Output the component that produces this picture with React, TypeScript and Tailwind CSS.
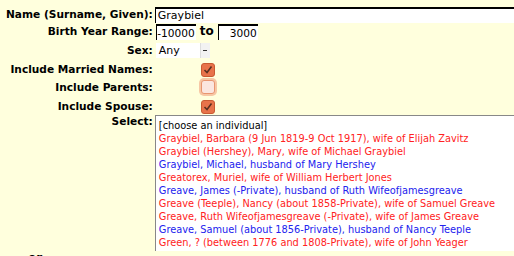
import React from 'react';

const people: { label: string; color: 'red' | 'blue' }[] = [
  { label: 'Graybiel, Barbara (9 Jun 1819-9 Oct 1917), wife of Elijah Zavitz', color: 'red' },
  { label: 'Graybiel (Hershey), Mary, wife of Michael Graybiel', color: 'red' },
  { label: 'Graybiel, Michael, husband of Mary Hershey', color: 'blue' },
  { label: 'Greatorex, Muriel, wife of William Herbert Jones', color: 'red' },
  { label: 'Greave, James (-Private), husband of Ruth Wifeofjamesgreave', color: 'blue' },
  { label: 'Greave (Teeple), Nancy (about 1858-Private), wife of Samuel Greave', color: 'red' },
  { label: 'Greave, Ruth Wifeofjamesgreave (-Private), wife of James Greave', color: 'red' },
  { label: 'Greave, Samuel (about 1856-Private), husband of Nancy Teeple', color: 'blue' },
  { label: 'Green, ? (between 1776 and 1808-Private), wife of John Yeager', color: 'red' },
];

function Check({ checked, focused }: { checked: boolean; focused?: boolean }) {
  return (
    <span
      className={`inline-flex items-center justify-center w-[14px] h-[14px] rounded-[3px] border ${
        checked ? 'bg-[#e8734a] border-[#c85a32]' : 'bg-[#fbe6df] border-[#e8956f]'
      } ${focused ? 'ring-2 ring-[#f7c7a4]' : ''}`}
    >
      {checked && (
        <svg width="10" height="10" viewBox="0 0 10 10">
          <path d="M1.5 5 L4 7.5 L8.5 1.5" fill="none" stroke="#5a3020" strokeWidth="1.6" />
        </svg>
      )}
    </span>
  );
}

function Label({ children }: { children: React.ReactNode }) {
  return <td className="text-right font-bold align-middle pr-[2px] whitespace-nowrap text-[10.6px]">{children}</td>;
}

export default function App() {
  return (
    <div
      className="w-[514px] h-[256px] overflow-hidden bg-[#ffffdd] text-black text-[11px] leading-[13px]"
      style={{ fontFamily: '"DejaVu Sans", sans-serif' }}
    >
      <table className="border-separate border-spacing-0 mt-[6px]">
        <tbody>
          <tr className="h-[17px]">
            <td className="text-right font-bold align-middle pl-[6px] pr-[2px] whitespace-nowrap text-[10.6px]">Name (Surname, Given):</td>
            <td className="align-middle">
              <div className="w-[380px] h-[16px] bg-white border-t-2 border-l border-black pl-[2px] leading-[14px]">Graybiel</div>
            </td>
          </tr>
          <tr className="h-[17px]">
            <Label>Birth Year Range:</Label>
            <td className="align-middle">
              <div className="flex items-center">
                <div className="w-[40px] h-[16px] bg-white border-t-2 border-l border-black text-right pr-[1px] leading-[14px] ml-[1px] text-[10.6px]">-10000</div>
                <span className="font-bold text-[12px] mx-[4px]">to</span>
                <div className="w-[40px] h-[16px] bg-white border-t-2 border-l border-black text-right pr-[1px] leading-[14px] text-[10.6px]">3000</div>
              </div>
            </td>
          </tr>
          <tr className="h-[20px]">
            <Label>Sex:</Label>
            <td className="align-middle">
              <div className="flex w-[54px] h-[15px] bg-white ml-[1px]">
                <span className="flex-1 pl-[3px] leading-[15px]">Any</span>
                <span className="w-[10px] h-[15px] bg-[#f2f2f2] border-l border-[#dddddd] flex items-center justify-center">
                  <span className="w-[4px] h-[1px] bg-[#333]" />
                </span>
              </div>
            </td>
          </tr>
          <tr className="h-[18px]">
            <Label>Include Married Names:</Label>
            <td className="align-middle pl-[46px] pt-[3px]">
              <Check checked />
            </td>
          </tr>
          <tr className="h-[17px]">
            <Label>Include Parents:</Label>
            <td className="align-middle pl-[46px] pt-[2px]">
              <Check checked={false} focused />
            </td>
          </tr>
          <tr className="h-[17px]">
            <Label>Include Spouse:</Label>
            <td className="align-middle pl-[46px] pt-[3px]">
              <Check checked />
            </td>
          </tr>
          <tr>
            <td className="text-right font-bold align-top pr-[2px] text-[10.6px]">Select:</td>
            <td className="align-top">
              <div className="w-[380px] h-[136px] bg-white border-l border-t border-[#888] pl-[3px] pt-[3px] text-[9.8px]">
                <div className="h-[13px]">[choose an individual]</div>
                {people.map(p => (
                  <div key={p.label} className={`h-[13px] whitespace-nowrap ${p.color === 'red' ? 'text-[#ff2222]' : 'text-[#2222ee]'}`}>
                    {p.label}
                  </div>
                ))}
              </div>
            </td>
          </tr>
        </tbody>
      </table>
      <div className="pl-[28px] font-bold text-[12px] mt-[1px]">or</div>
    </div>
  );
}
